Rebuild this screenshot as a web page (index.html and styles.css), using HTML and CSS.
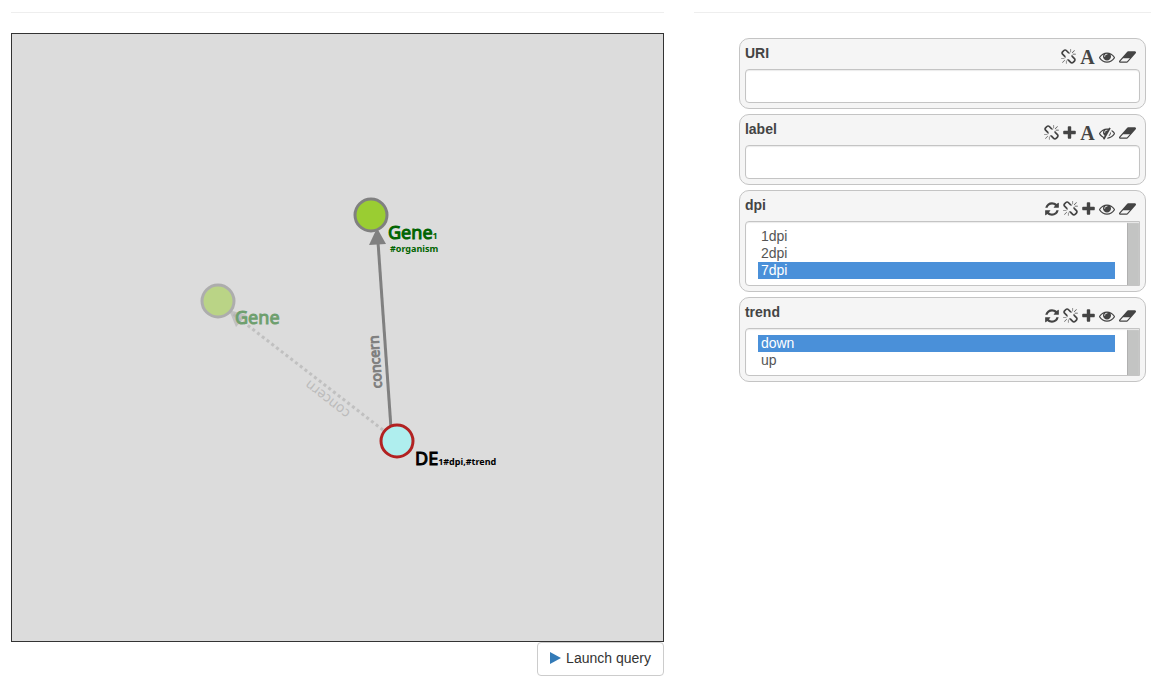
FILE: index.html
```html
<!DOCTYPE html>
<html lang="en">
<head>
<meta charset="utf-8">
<meta name="viewport" content="width=device-width, initial-scale=1">
<title>Query builder</title>
<link rel="stylesheet" href="styles.css">
</head>
<body>
<svg class="sprite" aria-hidden="true">
  <symbol id="unlink" viewBox="64 0 1664 1792"><path d="M503 1271l-256 256q-10 9-23 9-12 0-23-9-9-10-9-23t9-23l256-256q10-9 23-9t23 9q9 10 9 23t-9 23zm169 41v320q0 14-9 23t-23 9-23-9-9-23v-320q0-14 9-23t23-9 23 9 9 23zm-224-224q0 14-9 23t-23 9h-320q-14 0-23-9t-9-23 9-23 23-9h320q14 0 23 9t9 23zm1264 128q0 120-85 203l-147 146q-83 83-203 83-121 0-204-85l-334-335q-21-21-42-56l239-18 273 274q28 28 68 27.500t68-27.500l147-146q28-28 28-67 0-40-28-68l-274-275 18-239q35 21 56 42l336 336q84 86 84 204zm-617-724l-239 18-273-274q-28-28-68-28-39 0-68 27l-147 146q-28 28-28 67 0 40 28 68l274 274-18 240q-35-21-56-42l-336-336q-84-86-84-204 0-120 85-203l147-146q83-83 203-83 121 0 204 85l334 335q21 21 42 56zm633 84q0 14-9 23t-23 9h-320q-14 0-23-9t-9-23 9-23 23-9h320q14 0 23 9t9 23zm-544-544v320q0 14-9 23t-23 9-23-9-9-23v-320q0-14 9-23t23-9 23 9 9 23zm407 151l-256 256q-11 9-23 9t-23-9q-9-10-9-23t9-23l256-256q10-9 23-9t23 9q9 10 9 23t-9 23z"/></symbol>
  <symbol id="eye" viewBox="0 0 1792 1792"><path d="M1664 960q-152-236-381-353 61 104 61 225 0 185-131.500 316.500t-316.500 131.500-316.500-131.500-131.500-316.500q0-121 61-225-229 117-381 353 133 205 333.500 326.500t434.500 121.500 434.500-121.500 333.500-326.500zm-720-384q0-20-14-34t-34-14q-125 0-214.500 89.500t-89.500 214.500q0 20 14 34t34 14 34-14 14-34q0-86 61-147t147-61q20 0 34-14t14-34zm848 384q0 34-20 69-140 230-376.500 368.500t-499.500 138.500-499.500-139-376.500-368q-20-35-20-69t20-69q140-229 376.500-368t499.500-139 499.500 139 376.500 368q20 35 20 69z"/></symbol>
  <symbol id="eye-slash" viewBox="0 0 1792 1792"><path d="M555 1335l78-141q-87-63-136-159t-49-203q0-121 61-225-229 117-381 353 167 258 427 375zm389-759q0-20-14-34t-34-14q-125 0-214.500 89.500t-89.500 214.500q0 20 14 34t34 14 34-14 14-34q0-86 61-147t147-61q20 0 34-14t14-34zm363-191q0 7-1 9-106 189-316 567t-315 566l-49 89q-10 16-28 16-12 0-134-70-16-10-16-28 0-12 44-87-143-65-263.500-173t-208.500-245q-20-31-20-69t20-69q153-235 380-371t496-136q89 0 180 17l54-97q10-16 28-16 5 0 18 6t31 15.500 33 18.500 31.500 18.500 19.500 11.500q16 10 16 27zm37 447q0 139-79 253.500t-209 164.500l280-502q8 45 8 84zm448 128q0 35-20 69-39 64-109 145-150 172-347.500 267t-419.500 95l74-132q212-18 392.500-137t301.500-307q-115-179-282-294l63-112q95 64 182.500 153t144.500 184q20 34 20 69z"/></symbol>
  <symbol id="eraser" viewBox="64 0 1920 1792"><path d="M960 1408l336-384h-768l-336 384h768zm1013-1077q15 34 9.500 71.500t-30.500 65.500l-896 1024q-38 44-96 44h-768q-38 0-69.500-20.500t-47.500-54.500q-15-34-9.500-71.500t30.500-65.500l896-1024q38-44 96-44h768q38 0 69.500 20.500t47.500 54.500z"/></symbol>
  <symbol id="plus" viewBox="192 0 1408 1792"><path d="M1600 736v192q0 40-28 68t-68 28h-416v416q0 40-28 68t-68 28h-192q-40 0-68-28t-28-68v-416h-416q-40 0-68-28t-28-68v-192q0-40 28-68t68-28h416v-416q0-40 28-68t68-28h192q40 0 68 28t28 68v416h416q40 0 68 28t28 68z"/></symbol>
  <symbol id="refresh" viewBox="128 0 1536 1792"><path d="M1639 1056q0 5-1 7-64 268-268 434.500t-478 166.500q-146 0-282.500-55t-243.500-157l-129 129q-19 19-45 19t-45-19-19-45v-448q0-26 19-45t45-19h448q26 0 45 19t19 45-19 45l-137 137q71 66 161 102t187 36q134 0 250-65t186-179q11-17 53-117 8-23 30-23h192q13 0 22.500 9.500t9.500 22.500zm25-800v448q0 26-19 45t-45 19h-448q-26 0-45-19t-19-45 19-45l138-138q-148-137-349-137-134 0-250 65t-186 179q-11 17-53 117-8 23-30 23h-199q-13 0-22.500-9.500t-9.500-22.500v-7q65-268 270-434.500t480-166.500q146 0 284 55.500t245 156.500l130-129q19-19 45-19t45 19 19 45z"/></symbol>
</svg>

<main class="page">
  <section class="column query">
    <svg class="graph" role="img" aria-label="Query graph">
      <g class="suggested">
        <line class="link dotted" x1="371" y1="396" x2="212" y2="273"/>
        <path class="arrow" d="M217 276L235 281L224 293Z"/>
        <text class="link-label" transform="translate(339 378) rotate(218)">concern</text>
        <circle class="node gene" cx="206" cy="267" r="16"/>
        <text class="node-label gene-label" x="223" y="290">Gene</text>
      </g>
      <line class="link" x1="379" y1="394" x2="366" y2="208"/>
      <path class="arrow" d="M365 194L374 210L357 211Z"/>
      <text class="link-label strong" transform="translate(370 354) rotate(-94)">concern</text>
      <circle class="node gene" cx="359" cy="181" r="16"/>
      <text class="node-label gene-label" x="376" y="205">Gene<tspan class="index">1</tspan></text>
      <text class="attributes gene-label" x="378" y="218">#organism</text>
      <circle class="node de" cx="385" cy="407" r="16"/>
      <text class="node-label" x="403" y="431">DE<tspan class="index">1#dpi,#trend</tspan></text>
    </svg>
    <button class="launch" type="button"><svg class="play" viewBox="0 0 11 12" aria-hidden="true"><path d="M0 0L11 6L0 12Z"/></svg>Launch query</button>
  </section>

  <section class="column">
    <div class="attribute-list">
      <div class="panel">
        <div class="panel-head"><label for="uri">URI</label>
          <div class="tools">
            <button type="button" aria-label="Unlink"><svg class="w15"><use href="#unlink"/></svg></button>
            <button type="button" class="letter" aria-label="Text filter">A</button>
            <button type="button" aria-label="Show"><svg class="w16"><use href="#eye"/></svg></button>
            <button type="button" aria-label="Clear"><svg class="w17"><use href="#eraser"/></svg></button>
          </div>
        </div>
        <input class="field" id="uri" type="text">
      </div>
      <div class="panel">
        <div class="panel-head"><label for="label">label</label>
          <div class="tools">
            <button type="button" aria-label="Unlink"><svg class="w15"><use href="#unlink"/></svg></button>
            <button type="button" aria-label="Add"><svg class="w13"><use href="#plus"/></svg></button>
            <button type="button" class="letter" aria-label="Text filter">A</button>
            <button type="button" aria-label="Hide"><svg class="w16"><use href="#eye-slash"/></svg></button>
            <button type="button" aria-label="Clear"><svg class="w17"><use href="#eraser"/></svg></button>
          </div>
        </div>
        <input class="field" id="label" type="text">
      </div>
      <div class="panel">
        <div class="panel-head"><label for="dpi">dpi</label>
          <div class="tools">
            <button type="button" aria-label="Refresh"><svg class="w14"><use href="#refresh"/></svg></button>
            <button type="button" aria-label="Unlink"><svg class="w15"><use href="#unlink"/></svg></button>
            <button type="button" aria-label="Add"><svg class="w13"><use href="#plus"/></svg></button>
            <button type="button" aria-label="Show"><svg class="w16"><use href="#eye"/></svg></button>
            <button type="button" aria-label="Clear"><svg class="w17"><use href="#eraser"/></svg></button>
          </div>
        </div>
        <select class="field list" id="dpi" multiple size="3">
          <option>1dpi</option>
          <option>2dpi</option>
          <option selected>7dpi</option>
        </select>
      </div>
      <div class="panel">
        <div class="panel-head"><label for="trend">trend</label>
          <div class="tools">
            <button type="button" aria-label="Refresh"><svg class="w14"><use href="#refresh"/></svg></button>
            <button type="button" aria-label="Unlink"><svg class="w15"><use href="#unlink"/></svg></button>
            <button type="button" aria-label="Add"><svg class="w13"><use href="#plus"/></svg></button>
            <button type="button" aria-label="Show"><svg class="w16"><use href="#eye"/></svg></button>
            <button type="button" aria-label="Clear"><svg class="w17"><use href="#eraser"/></svg></button>
          </div>
        </div>
        <select class="field list" id="trend" multiple size="2">
          <option selected>down</option>
          <option>up</option>
        </select>
      </div>
    </div>
  </section>
</main>
</body>
</html>
```
FILE: styles.css
```css
* { box-sizing: border-box; }

body {
  margin: 0;
  background: #fff;
  color: #333;
  font: 14px/20px "Liberation Sans", Arial, sans-serif;
}

.sprite { display: none; }

.page {
  display: grid;
  grid-template-columns: minmax(0, 10fr) minmax(0, 7fr);
  gap: 30px;
  align-items: start;
  padding: 12px 9px 10px 11px;
}

.column {
  border-top: 1px solid #eee;
  padding-top: 20px;
}

.query {
  display: flex;
  flex-direction: column;
  align-items: flex-end;
}

.graph {
  display: block;
  width: 100%;
  height: 609px;
  border: 1px solid #333;
  background: #dcdcdc;
  font-family: "Noto Sans", "Open Sans", sans-serif;
}

.link { stroke: #808080; stroke-width: 3px; }
.dotted { stroke-dasharray: 3 3; }
.arrow { fill: #808080; }
.suggested { opacity: 0.5; }
.suggested .link,
.suggested .arrow { stroke-opacity: 0.6; fill-opacity: 0.6; }
.link-label { font-size: 14px; fill: #808080; }
.suggested .link-label { fill-opacity: 0.7; }
.strong { stroke: #808080; stroke-width: 1px; }

.node { stroke: #808080; stroke-width: 3px; }
.gene { fill: #9acd32; }
.de { fill: #afeeee; stroke: #b22222; }

.node-label { font-size: 18px; fill: #000; stroke: #000; stroke-width: 1px; }
.gene-label { fill: #006400; stroke: #006400; }
.index,
.attributes { font-size: 9px; font-weight: 700; stroke: none; }

.launch {
  display: flex;
  align-items: center;
  gap: 5px;
  padding: 5px 12px 7px;
  border: 1px solid #ccc;
  border-radius: 4px;
  background: #fff;
  color: #333;
  font: inherit;
}

.play { width: 11px; height: 12px; fill: #337ab7; }

.attribute-list {
  display: flex;
  flex-direction: column;
  gap: 5px;
  padding: 5px 5px 0 45px;
}

.panel {
  padding: 5px;
  border: 1px solid #c4c4c4;
  border-radius: 10px;
  background: #f5f5f5;
  color: #444;
}

.panel-head {
  display: flex;
  justify-content: space-between;
  align-items: flex-start;
  height: 25px;
}

.panel-head label { font-weight: 700; line-height: 18px; }

.tools { display: flex; gap: 4px; padding: 5px 4px 0 0; }

.tools button {
  display: block;
  height: 16px;
  padding: 0;
  border: 0;
  background: none;
  color: #444;
}

.tools svg { display: block; height: 16px; fill: currentColor; }
.w13 { width: 13px; }
.w14 { width: 14px; }
.w15 { width: 15px; }
.w16 { width: 16px; }
.w17 { width: 17px; }

.tools .letter {
  width: 15px;
  font: 700 20px/16px "Liberation Serif", serif;
}

.field {
  display: block;
  width: 100%;
  height: 34px;
  padding: 6px 12px;
  border: 1px solid #c4c4c4;
  border-radius: 4px;
  background: #fff;
  box-shadow: inset 0 1px 1px #ececec;
  color: #555;
  font: inherit;
}

.list {
  appearance: none;
  height: auto;
  padding-right: 24px;
  overflow: hidden;
  border-radius: 4px 0 0 4px;
  background: linear-gradient(to right, #b0b0b0 1px, #c3c4c3 1px) right / 12px 100% no-repeat #fff;
}

.list option {
  height: 17px;
  min-height: 17px;
  padding: 0 3px 2px;
  line-height: 15px;
}

.list option:checked {
  background: linear-gradient(#4a90d9, #4a90d9);
  color: #fff;
}
```
